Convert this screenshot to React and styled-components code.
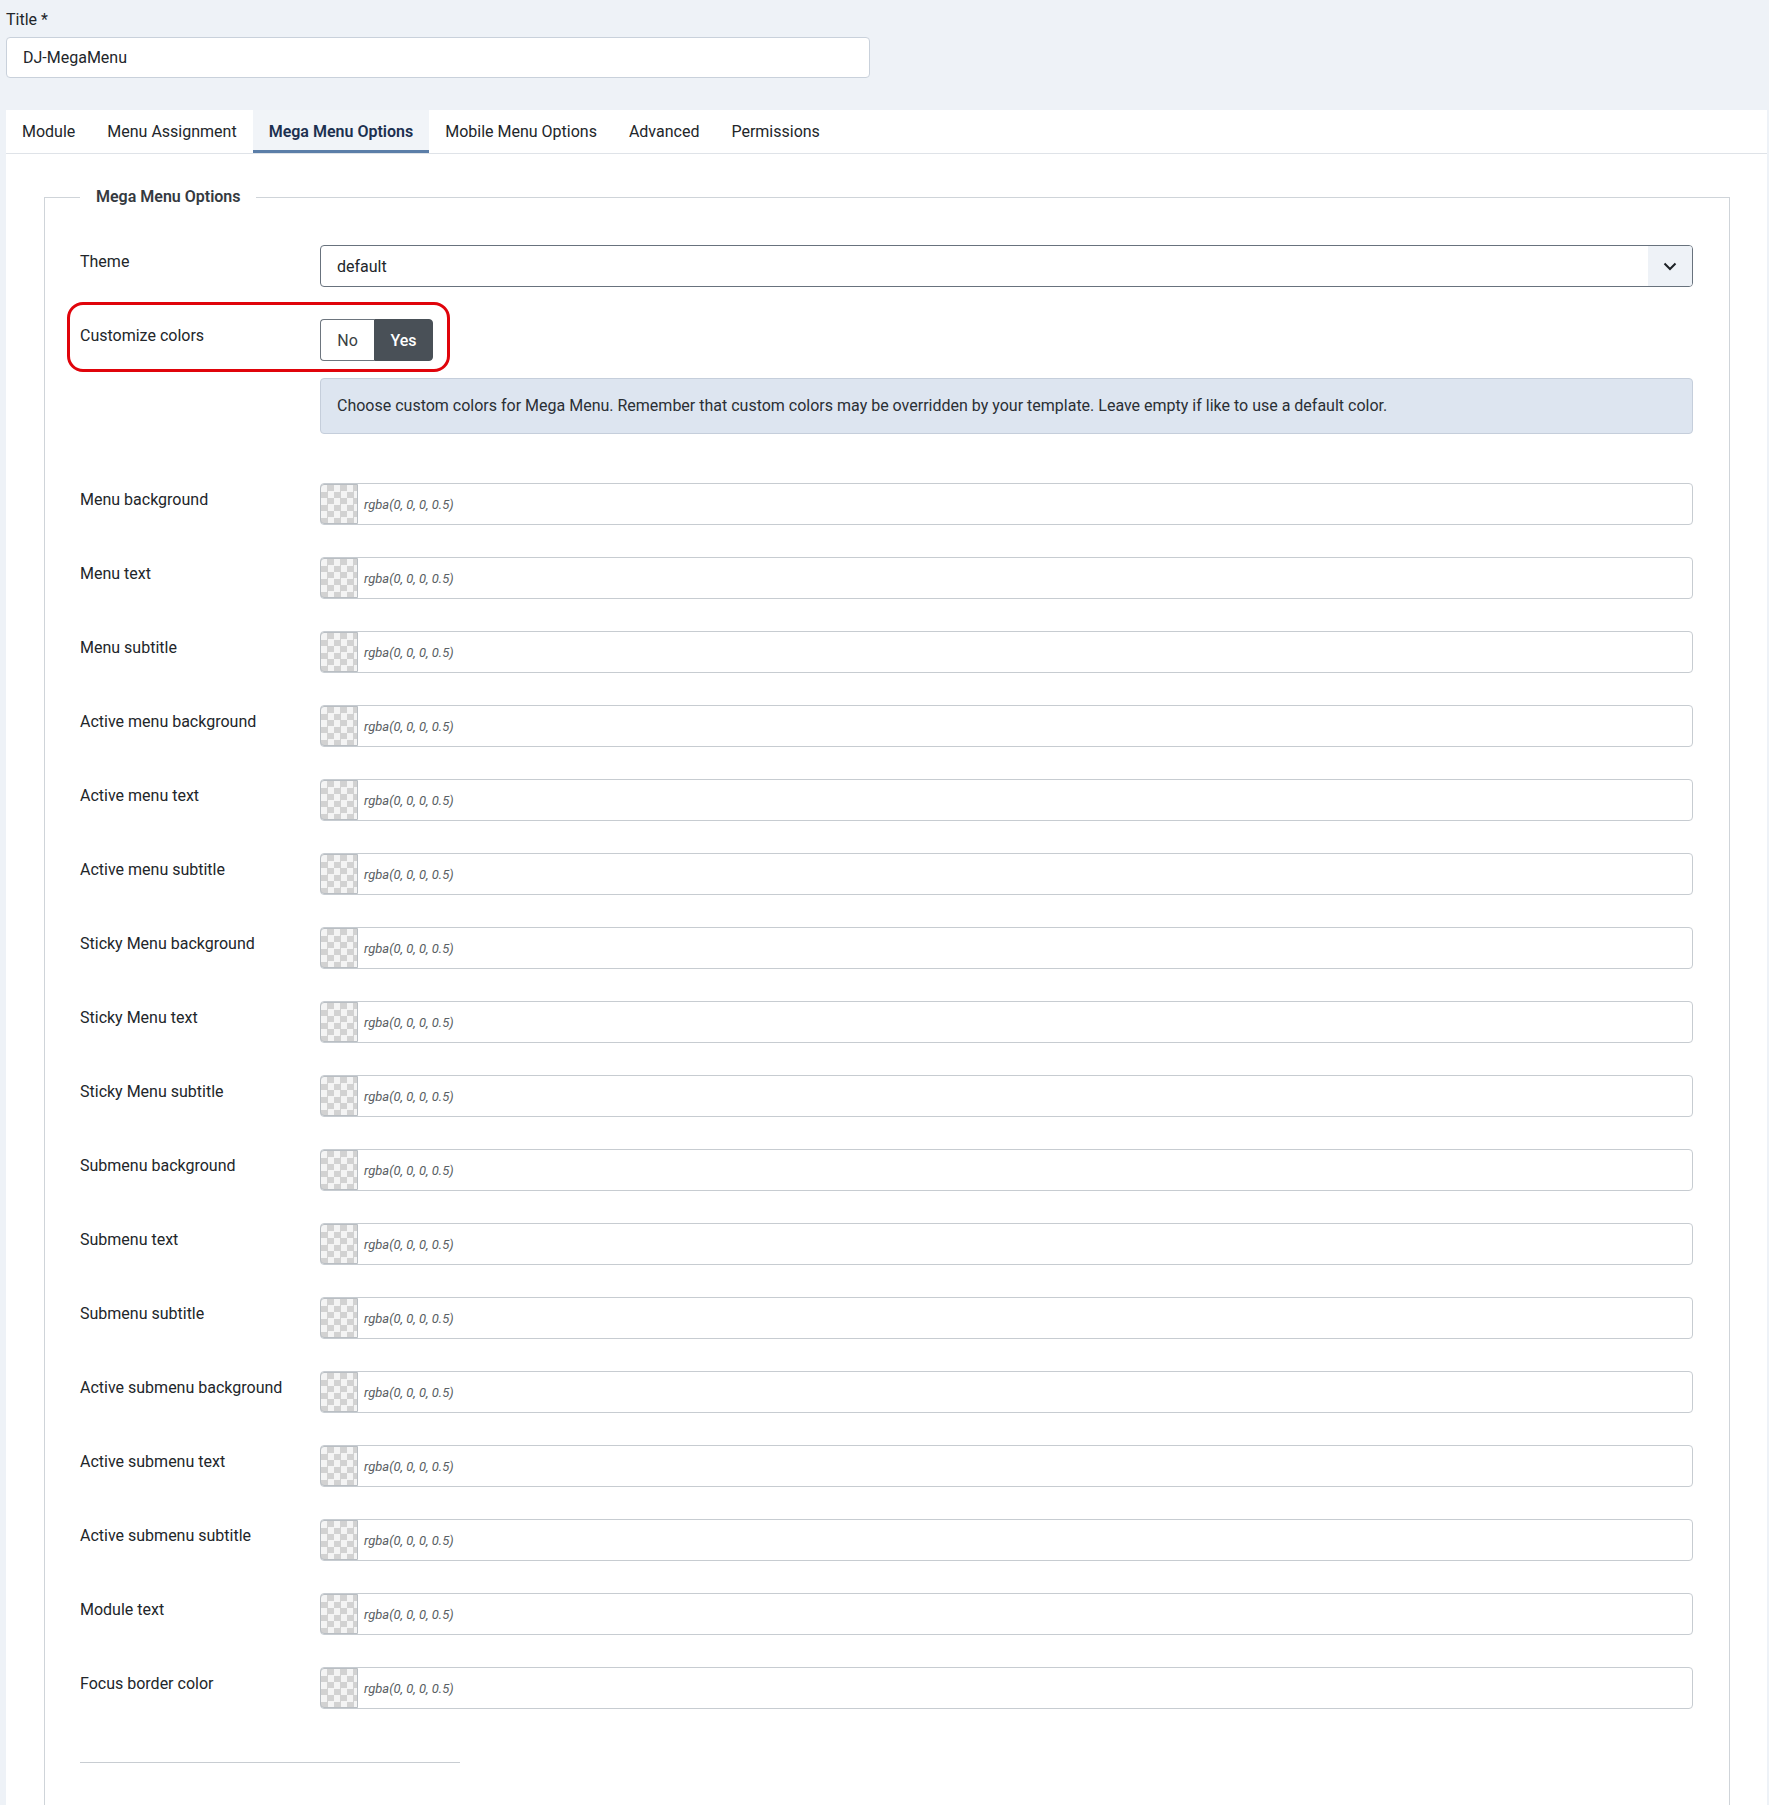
import React from "react";
import styled, { createGlobalStyle } from "styled-components";

const GlobalStyle = createGlobalStyle`
    body {
        margin: 0;
        background-color: #eef2f7;
        font-family: Roboto, "Liberation Sans", sans-serif;
        font-size: 16px;
        color: #22262a;
    }
`
const Page = styled.div`
    padding: 0 2px 0 6px;
`
const TitleLabel = styled.label`
    display: block;
    padding-top: 8px;
    line-height: 24px;
`
const TitleInput = styled.div`
    box-sizing: border-box;
    width: 864px;
    height: 41px;
    margin-top: 5px;
    padding: 0 16px;
    display: flex;
    align-items: center;
    background-color: #fff;
    border: 1px solid #c9d1db;
    border-radius: 4px;
`
const TabBar = styled.div`
    display: flex;
    margin-top: 32px;
    height: 43px;
    background-color: #fff;
    border-bottom: 1px solid #dfe3e8;
`
const Tab = styled.div`
    display: flex;
    align-items: center;
    padding: 0 16px;
    color: ${props => props.$active ? '#1c3050' : '#22262a'};
    font-weight: ${props => props.$active ? 600 : 400};
    background-color: ${props => props.$active ? '#f1f4f8' : 'transparent'};
    box-shadow: ${props => props.$active ? 'inset 0 -3px 0 #5b7ea8' : 'none'};
`
const Panel = styled.div`
    background-color: #fff;
    padding: 31px 37px 0 38px;
`
const Fieldset = styled.fieldset`
    margin: 0;
    padding: 36px 36px 80px 35px;
    border: 1px solid #cfd4d9;
    border-bottom: 0;
`
const Legend = styled.legend`
    padding: 0 15px 0 16px;
    margin-left: 0;
    line-height: 24px;
    font-weight: 600;
    color: #353a3f;
`
const Field = styled.div`
    position: relative;
    display: grid;
    grid-template-columns: 240px 1fr;
    margin-bottom: ${props => props.$gap || 32}px;
`
const Label = styled.div`
    padding-top: 5px;
    line-height: 24px;
`
const Select = styled.div`
    box-sizing: border-box;
    height: 42px;
    display: flex;
    align-items: center;
    justify-content: space-between;
    padding-left: 16px;
    border: 1px solid #68727d;
    border-radius: 4px;
    overflow: hidden;
`
const Caret = styled.div`
    width: 44px;
    height: 100%;
    display: flex;
    align-items: center;
    justify-content: center;
    background-color: #eef2f7;
`
const Toggle = styled.div`
    display: flex;
    height: 42px;
`
const ToggleOption = styled.div`
    box-sizing: border-box;
    display: flex;
    align-items: center;
    justify-content: center;
    width: ${props => props.$on ? '59px' : '54px'};
    color: ${props => props.$on ? '#fff' : '#3a3f44'};
    font-weight: ${props => props.$on ? 500 : 400};
    background-color: ${props => props.$on ? '#495057' : '#fff'};
    border: 1px solid ${props => props.$on ? '#495057' : '#6d757e'};
    border-radius: ${props => props.$on ? '0 4px 4px 0' : '4px 0 0 4px'};
    border-right: ${props => props.$on ? '' : '0'};
`
const Highlight = styled.div`
    position: absolute;
    left: -13px;
    top: -17px;
    width: 383px;
    height: 70px;
    box-sizing: border-box;
    border: 3px solid #e0040b;
    border-radius: 16px;
    pointer-events: none;
`
const Alert = styled.div`
    grid-column: 2;
    padding: 15px 16px;
    line-height: 24px;
    color: #2a2f35;
    background-color: #dde5f0;
    border: 1px solid #c5cedb;
    border-radius: 4px;
`
const ColorInput = styled.div`
    box-sizing: border-box;
    height: 42px;
    display: flex;
    align-items: center;
    border: 1px solid #c7ccd1;
    border-radius: 4px;
`
const Swatch = styled.span`
    box-sizing: border-box;
    width: 38px;
    height: 100%;
    border: 1px solid #b9bec3;
    border-radius: 4px 0 0 4px;
    margin-left: -1px;
    background-color: #f4f4f4;
    background-image: conic-gradient(#d2d2d2 25%, transparent 0 50%, #d2d2d2 0 75%, transparent 0);
    background-size: 13px 13px;
`
const ColorValue = styled.span`
    margin-left: 6px;
    font-size: 13px;
    font-style: italic;
    color: #5a5f64;
`
const Divider = styled.hr`
    width: 380px;
    margin: 53px 0 0;
    border: 0;
    border-top: 1px solid #c8cdd2;
`

const tabs = ['Module', 'Menu Assignment', 'Mega Menu Options', 'Mobile Menu Options', 'Advanced', 'Permissions']

const colorFields = [
    'Menu background',
    'Menu text',
    'Menu subtitle',
    'Active menu background',
    'Active menu text',
    'Active menu subtitle',
    'Sticky Menu background',
    'Sticky Menu text',
    'Sticky Menu subtitle',
    'Submenu background',
    'Submenu text',
    'Submenu subtitle',
    'Active submenu background',
    'Active submenu text',
    'Active submenu subtitle',
    'Module text',
    'Focus border color',
]

export default function App() {
    return (
        <Page>
            <GlobalStyle />
            <TitleLabel>Title *</TitleLabel>
            <TitleInput>DJ-MegaMenu</TitleInput>
            <TabBar>
                {tabs.map(t => (
                    <Tab key={t} $active={t === 'Mega Menu Options'}>{t}</Tab>
                ))}
            </TabBar>
            <Panel>
                <Fieldset>
                    <Legend>Mega Menu Options</Legend>
                    <Field>
                        <Label>Theme</Label>
                        <Select>
                            default
                            <Caret>
                                <svg width="14" height="9" viewBox="0 0 14 9">
                                    <polyline points="1.5,1.5 7,7 12.5,1.5" fill="none" stroke="#1d2126" strokeWidth="2" />
                                </svg>
                            </Caret>
                        </Select>
                    </Field>
                    <Field $gap={17}>
                        <Label>Customize colors</Label>
                        <Toggle>
                            <ToggleOption>No</ToggleOption>
                            <ToggleOption $on>Yes</ToggleOption>
                        </Toggle>
                        <Highlight />
                    </Field>
                    <Field $gap={49}>
                        <Alert>Choose custom colors for Mega Menu. Remember that custom colors may be overridden by your template. Leave empty if like to use a default color.</Alert>
                    </Field>
                    {colorFields.map(f => (
                        <Field key={f}>
                            <Label>{f}</Label>
                            <ColorInput>
                                <Swatch />
                                <ColorValue>rgba(0, 0, 0, 0.5)</ColorValue>
                            </ColorInput>
                        </Field>
                    ))}
                    <Divider />
                </Fieldset>
            </Panel>
        </Page>
    )
}
